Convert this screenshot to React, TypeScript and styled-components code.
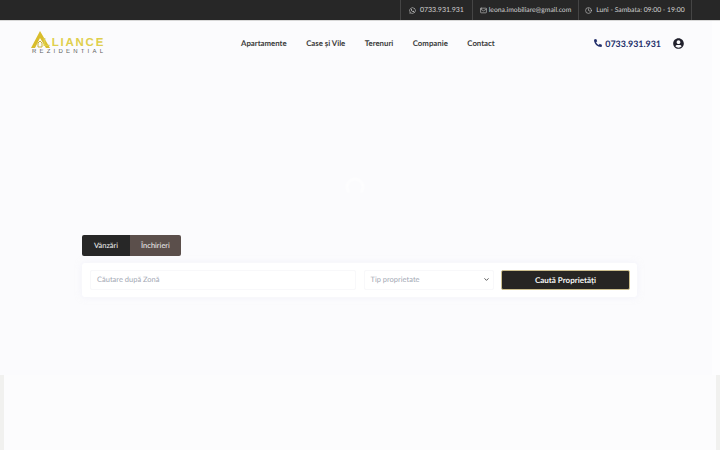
import styled, { createGlobalStyle } from "styled-components";
import { Clock, Mail, ChevronDown } from "lucide-react";
import { FaWhatsapp, FaUserCircle, FaPhoneAlt } from "react-icons/fa";

const GlobalStyle = createGlobalStyle`
  html, body {
    margin: 0;
    padding: 0;
    background: #fcfcfd;
    font-family: "Lato", "Open Sans", sans-serif;
    text-rendering: geometricPrecision;
    overflow: hidden;
  }
  * { box-sizing: border-box; }
`;

const Page = styled.div`
  width: 720px;
  height: 450px;
  display: flex;
  flex-direction: column;
  overflow: hidden;
`;

const TopBar = styled.div`
  height: 21px;
  flex: none;
  background: #272727;
  border-bottom: 1px solid #d8d8d8;
  display: flex;
  justify-content: flex-end;
  padding-right: 28px;
`;

const TopItem = styled.div<{ $width: number; $size: number }>`
  width: ${(p) => p.$width}px;
  border-left: 1px solid #454545;
  display: flex;
  align-items: center;
  justify-content: center;
  gap: 2px;
  font-size: ${(p) => p.$size}px;
  color: #d0d0d0;
  white-space: nowrap;
  &:last-child {
    border-right: 1px solid #454545;
  }
`;

const Hero = styled.div`
  height: 354px;
  flex: none;
  background: #fbfbfd;
  border-right: 8px solid #fdfdfe;
  position: relative;
  display: flex;
  flex-direction: column;
`;

const Header = styled.div`
  height: 45px;
  display: flex;
  align-items: center;
  padding: 0 28px 1px 30px;
`;

const Logo = styled.div`
  width: 75px;
  height: 26px;
  position: relative;
  flex: none;
`;

const LogoMark = styled.svg`
  position: absolute;
  left: 0;
  top: 0;
`;

const LogoName = styled.div`
  position: absolute;
  left: 13px;
  top: 8px;
  font-family: "Liberation Sans", sans-serif;
  font-weight: 700;
  font-size: 11.5px;
  letter-spacing: 1.75px;
  color: #dfcf4d;
  line-height: 11px;
`;

const LogoSub = styled.div`
  position: absolute;
  left: 2px;
  top: 19px;
  font-family: "Liberation Sans", sans-serif;
  font-size: 6px;
  letter-spacing: 3.2px;
  color: #5c5c5c;
  line-height: 7px;
  white-space: nowrap;
`;

const Nav = styled.nav`
  display: flex;
  gap: 19.5px;
  margin-left: 136px;
  font-size: 7.8px;
  font-weight: 700;
  color: #3a3a3a;
  white-space: nowrap;
`;

const HeaderRight = styled.div`
  margin-left: auto;
  display: flex;
  align-items: center;
  gap: 12px;
`;

const CallLink = styled.div`
  display: flex;
  align-items: center;
  gap: 3px;
  font-size: 8.9px;
  font-weight: 700;
  color: #232f6b;
`;

const UserIcon = styled(FaUserCircle)`
  width: 11px;
  height: 11px;
  color: #20202c;
`;

const Spinner = styled.div`
  position: absolute;
  left: 346px;
  top: 157px;
  width: 18px;
  height: 18px;
  border-radius: 50%;
  border: 2px solid #ffffff;
  border-bottom-color: transparent;
  filter: blur(1px);
`;

const SearchArea = styled.div`
  margin: 169px 75px 0 82px;
`;

const Tabs = styled.div`
  display: flex;
  height: 21px;
`;

const Tab = styled.div<{ $active?: boolean }>`
  width: ${(p) => (p.$active ? 48 : 51)}px;
  background: ${(p) => (p.$active ? "#272727" : "#5b4f4b")};
  color: #f2f2f2;
  font-size: 7.5px;
  display: flex;
  align-items: center;
  justify-content: center;
  border-radius: ${(p) => (p.$active ? "2px 0 0 2px" : "0 2px 2px 0")};
`;

const SearchCard = styled.div`
  margin-top: 7px;
  height: 34px;
  background: #ffffff;
  border-radius: 3px;
  box-shadow: 0 0 6px rgba(235, 235, 248, 0.5);
  padding: 7px 7px 7px 8px;
  display: flex;
  gap: 7.5px;
`;

const Field = styled.div<{ $width: number }>`
  width: ${(p) => p.$width}px;
  border: 1px solid #f8f8fa;
  border-radius: 2px;
  background: #fff;
  display: flex;
  align-items: center;
  justify-content: space-between;
  padding: 0 3px 1px 6px;
  font-size: 7.5px;
  color: #a3a8b4;
`;

const SearchButton = styled.div`
  flex: 1;
  background: #272523;
  border: 1px solid #cdbf8e;
  border-radius: 2px;
  color: #f4f4f4;
  font-size: 8px;
  font-weight: 700;
  display: flex;
  align-items: center;
  justify-content: center;
`;

const Lower = styled.div`
  flex: 1;
  background: #fcfcfd;
  border-left: 4px solid #f1f1ef;
  border-right: 4px solid #f1f1ef;
`;

export default function App() {
  return (
    <Page>
      <GlobalStyle />
      <TopBar>
        <TopItem $width={72} $size={7}>
          <FaWhatsapp size={7} />
          <span>&nbsp;0733.931.931</span>
        </TopItem>
        <TopItem $width={106} $size={6.8}>
          <Mail size={7} />
          leona.imobiliare@gmail.com
        </TopItem>
        <TopItem $width={114} $size={6.8}>
          <Clock size={7} />
          <span>&nbsp;Luni - Sambata: 09:00 - 19:00</span>
        </TopItem>
      </TopBar>
      <Hero>
        <Header>
          <Logo>
            <LogoMark width="24" height="20" viewBox="0 0 24 20">
              <path d="M10 1 L1 18 L5 18 L10 8 L16 18 L20 18 Z" fill="#d9bd2c" />
              <path d="M8 13 L10 11 L12 13 L12 17 L8 17 Z" fill="none" stroke="#c9b13a" strokeWidth="1" />
            </LogoMark>
            <LogoName>LLIANCE</LogoName>
            <LogoSub>REZIDENTIAL</LogoSub>
          </Logo>
          <Nav>
            <span>Apartamente</span>
            <span>Case și Vile</span>
            <span>Terenuri</span>
            <span>Companie</span>
            <span>Contact</span>
          </Nav>
          <HeaderRight>
            <CallLink>
              <FaPhoneAlt size={8} />
              0733.931.931
            </CallLink>
            <UserIcon />
          </HeaderRight>
        </Header>
        <Spinner />
        <SearchArea>
          <Tabs>
            <Tab $active>Vânzări</Tab>
            <Tab>Închirieri</Tab>
          </Tabs>
          <SearchCard>
            <Field $width={266}>Căutare după Zonă</Field>
            <Field $width={130}>
              Tip proprietate
              <ChevronDown size={7} color="#444" strokeWidth={3} />
            </Field>
            <SearchButton>Caută Proprietăți</SearchButton>
          </SearchCard>
        </SearchArea>
      </Hero>
      <Lower />
    </Page>
  );
}
